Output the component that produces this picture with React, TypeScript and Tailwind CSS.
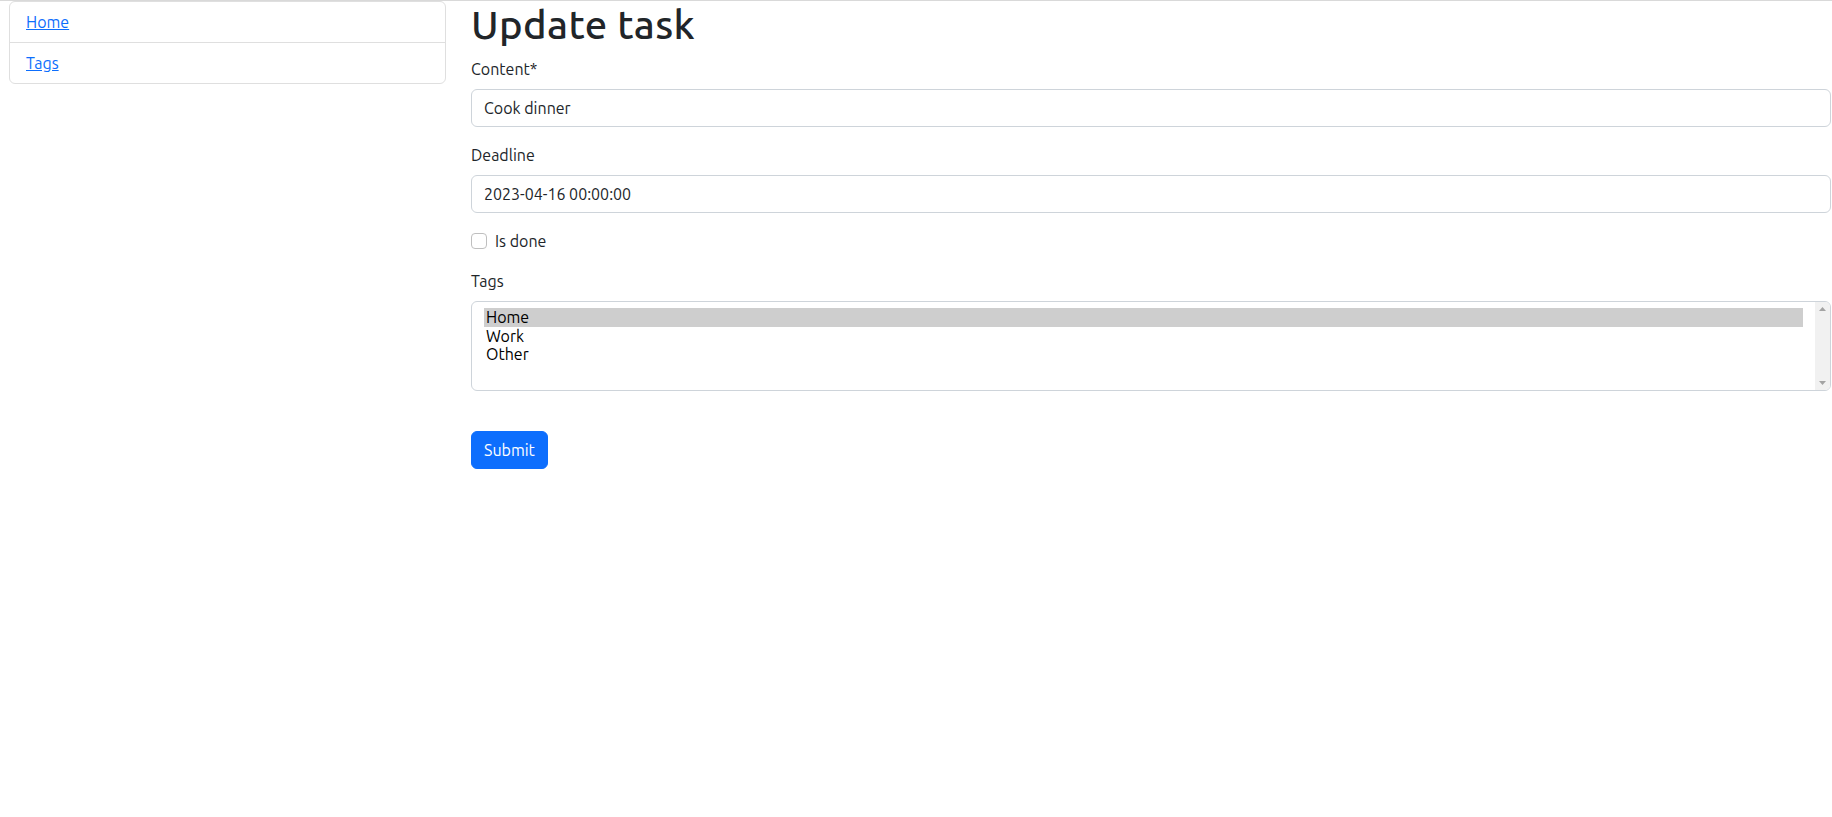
import { useState } from 'react';

const font = { fontFamily: 'Ubuntu, Lato, "Open Sans", sans-serif' };

const tags = ['Home', 'Work', 'Other'];

function Sidebar() {
  return (
    <div className="w-[446px] shrink-0 pl-[9px]">
      <ul className="rounded-[6px] border border-[#dfdfdf]">
        <li className="px-4 py-2 leading-6">
          <a href="#" className="text-[#0d6efd] underline">Home</a>
        </li>
        <li className="border-t border-[#dfdfdf] px-4 py-2 leading-6">
          <a href="#" className="text-[#0d6efd] underline">Tags</a>
        </li>
      </ul>
    </div>
  );
}

// multi select, drawn by hand so the classic scrollbar shows
function TagList() {
  const [selected, setSelected] = useState<string[]>(['Home']);

  const toggle = (t: string) =>
    setSelected((s) => (s.includes(t) ? s.filter((x) => x !== t) : [...s, t]));

  return (
    <div role="listbox" className="flex h-[90px] w-full overflow-hidden rounded-[6px] border border-[#ced4da]">
      <div className="flex-1 px-3 py-1.5">
        {tags.map((t) => (
          <div
            key={t}
            role="option"
            aria-selected={selected.includes(t)}
            onClick={() => toggle(t)}
            className={`h-[18.67px] px-0.5 leading-[18px] text-[#000] ${selected.includes(t) ? 'bg-[#cecece]' : ''}`}
          >
            {t}
          </div>
        ))}
      </div>
      <div className="flex w-[15px] flex-col items-center justify-between bg-[#f1f1f1] py-[5px]">
        <svg width="7" height="4" viewBox="0 0 7 4">
          <path d="M3.5 0L7 4H0z" fill="#a3a3a3" />
        </svg>
        <svg width="7" height="4" viewBox="0 0 7 4">
          <path d="M0 0h7L3.5 4z" fill="#a3a3a3" />
        </svg>
      </div>
    </div>
  );
}

function TaskForm() {
  const [done, setDone] = useState(false);

  return (
    <div className="ml-[25px] flex-1 pr-px">
      <h1 className="mb-2 text-[40px] font-medium leading-[48px] tracking-[0.35px] text-[#212529]">
        Update task
      </h1>

      <div className="mb-4">
        <label className="mb-2 block leading-6">Content*</label>
        <input
          type="text"
          defaultValue="Cook dinner"
          className="block h-[38px] w-full rounded-[6px] border border-[#ced4da] px-3 py-1.5 leading-6 text-[#212529] outline-none"
        />
      </div>

      <div className="mb-4">
        <label className="mb-2 block leading-6">Deadline</label>
        <input
          type="text"
          defaultValue="2023-04-16 00:00:00"
          className="block h-[38px] w-full rounded-[6px] border border-[#ced4da] px-3 py-1.5 leading-6 text-[#212529] outline-none"
        />
      </div>

      <div className="mb-4 flex min-h-6 items-start">
        <input
          type="checkbox"
          checked={done}
          onChange={(e) => setDone(e.target.checked)}
          className="mt-1 h-4 w-4 shrink-0 appearance-none rounded-[4px] border border-[#bfbfbf] bg-white checked:border-[#0d6efd] checked:bg-[#0d6efd]"
        />
        <label className="ml-2 leading-6">Is done</label>
      </div>

      <div className="mb-4">
        <label className="mb-2 block leading-6">Tags</label>
        <TagList />
      </div>

      <button
        type="button"
        className="mt-6 rounded-[6px] border border-[#0d6efd] bg-[#0d6efd] px-3 py-1.5 leading-6 text-white"
      >
        Submit
      </button>
    </div>
  );
}

export default function App() {
  return (
    <div className="min-h-[817px] border-t border-[#d9d9d9] bg-white text-base text-[#212529]" style={font}>
      <div className="flex">
        <Sidebar />
        <TaskForm />
      </div>
    </div>
  );
}
